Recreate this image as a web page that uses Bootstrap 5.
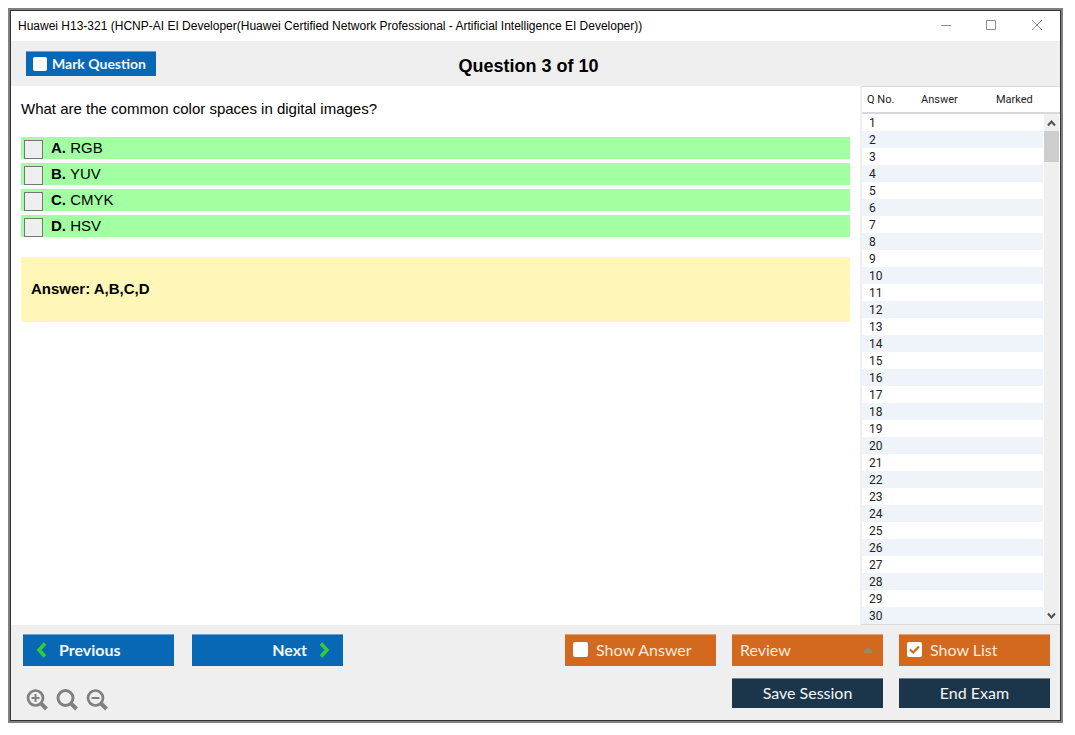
<!DOCTYPE html>
<html lang="en">
<head>
<meta charset="utf-8">
<meta name="viewport" content="width=device-width, initial-scale=1">
<title>Huawei H13-321 Exam</title>
<link href="https://cdn.jsdelivr.net/npm/bootstrap@5.3.0/dist/css/bootstrap.min.css" rel="stylesheet">
<style>
body { font-family: "Liberation Sans", Arial, sans-serif; font-size: 15px; line-height: 22px; color: #000; background: #fff; padding: 8px 12px 12px 8px; }
.app-frame { border: 2px solid #808080; }
.app-window { border: 1px solid #333; background: #fff; }
.title-bar { height: 30px; font-size: 12px; padding-left: 7px; }
.win-btn { width: 46px; height: 30px; color: #8c8c8c; border: 0; background: none; padding: 0; }
.win-btn svg, .zoom-btn svg, .nav-btn svg { display: block; }
.question-bar { background: #efefef; height: 45px; padding: 0 29px 0 15px; }
.question-bar > * { flex: 1 1 0; }
.question-bar h1 { font-size: 18px; line-height: 22px; padding-top: 4px; }
.lato { font-family: Lato, Carlito, sans-serif; }
.flat { border: 0; border-top: 1px solid; border-radius: 0; height: 32px; width: 151px; font-size: 16px; line-height: 20px; color: #fff; padding: 0 8px 2px; display: flex; align-items: center; }
.blue { background: #0868b6; border-color: #69a3d1; font-weight: 700; color: #f2f7fc; }
.orange { background: #d2691e; border-color: #e0a276; color: #fbe9dd; }
.navy { background: #1b354a; border-color: #75838f; color: #f4f6f8; height: 30px; }
.mark-btn { width: 130px; height: 25px; font-size: 14px; padding: 0 7px; gap: 5px; }
.nav-btn { padding: 0 12px 1px; gap: 8px; }
.flat .form-check-input { width: 15px; height: 15px; margin: 0; border: 0; border-radius: 2px; background-color: #fff; flex: none; }
.mark-btn .form-check-input { width: 14px; height: 14px; }
.flat .form-check-input:checked { background-image: url("data:image/svg+xml,%3Csvg xmlns='http://www.w3.org/2000/svg' viewBox='0 0 15 15'%3E%3Cpath d='M3 7.5 6.2 10.5 12 4.5' fill='none' stroke='%23d2691e' stroke-width='2.2'/%3E%3C/svg%3E"); }
.question-pane { padding: 12px 10px; min-width: 0; }
.option-list { margin-top: 17px; gap: 4px; }
.option-row { background: #a2ffa2; height: 22px; padding-left: 3px; gap: 8px; }
.option-row input { appearance: none; width: 19px; height: 19px; margin: 3px 0 0; border: 1px solid #767676; background: #efefef; flex: none; }
.option-row input:checked { background: #767676; }
.answer-box { background: #fef7b8; margin-top: 20px; padding: 21px 10px 22px; }
.list-pane { width: 200px; flex: none; border-left: 2px solid #efefef; border-bottom: 1px solid #d9d9d9; font-family: Roboto, sans-serif; font-size: 11px; }
.q-table { width: 100%; table-layout: fixed; border-collapse: separate; border-spacing: 0; color: #222; }
.q-table th { font-weight: 400; height: 28px; line-height: 14px; padding: 0 0 0 5px; border-top: 1px solid #d9d9d9; border-bottom: 2px solid #d9d9d9; }
.q-table td { height: 17px; line-height: 15px; padding: 2px 0 0 7px; font-size: 12px; }
.q-table tbody tr:nth-child(even) { background: #eef4f9; }
.scroll-col { width: 17px; flex: none; border-top: 1px solid #d9d9d9; }
.scroll-cap { height: 27px; border-bottom: 2px solid #d9d9d9; }
.scroll-track { background: #efefef; border: solid #fff; border-width: 0 1px; flex: 1; }
.scroll-thumb { background: #cdcdcd; height: 31px; }
.footer-bar { background: #efefef; padding: 9px 10px 9px 12px; }
.footer-nav { gap: 18px; }
.footer-actions { gap: 12px 16px; display: grid; grid-template-columns: repeat(3, 151px); align-content: start; }
.zoom-group { padding: 23px 0 0 3px; gap: 8px; }
.zoom-btn { border: 0; background: none; padding: 0; color: #808080; }
</style>
</head>
<body class="min-vh-100 d-flex">
<div class="app-frame flex-grow-1 d-flex">
<div class="app-window flex-grow-1 d-flex flex-column">
  <header class="title-bar d-flex align-items-center justify-content-between">
    <span>Huawei H13-321 (HCNP-AI EI Developer(Huawei Certified Network Professional - Artificial Intelligence EI Developer))</span>
    <div class="d-flex">
      <button class="win-btn" type="button" aria-label="Minimize"><svg width="46" height="30" fill="none" stroke="currentColor"><path d="M19 14.500h10"/></svg></button>
      <button class="win-btn" type="button" aria-label="Maximize"><svg width="46" height="30" fill="none" stroke="currentColor"><path d="M18.500 9.500h9v9h-9z"/></svg></button>
      <button class="win-btn" type="button" aria-label="Close"><svg width="46" height="30" fill="none" stroke="currentColor"><path d="M18 9l10 10M28 9l-10 10"/></svg></button>
    </div>
  </header>

  <div class="question-bar d-flex align-items-center">
    <div><label class="flat blue mark-btn lato"><input class="form-check-input" type="checkbox">Mark Question</label></div>
    <h1 class="fw-bold text-center m-0">Question 3 of 10</h1>
    <div></div>
  </div>

  <main class="d-flex flex-grow-1">
    <section class="question-pane flex-grow-1">
      <p class="m-0">What are the common color spaces in digital images?</p>
      <div class="option-list d-flex flex-column">
        <label class="option-row d-flex"><input type="checkbox"><span><b>A.</b> RGB</span></label>
        <label class="option-row d-flex"><input type="checkbox"><span><b>B.</b> YUV</span></label>
        <label class="option-row d-flex"><input type="checkbox"><span><b>C.</b> CMYK</span></label>
        <label class="option-row d-flex"><input type="checkbox"><span><b>D.</b> HSV</span></label>
      </div>
      <div class="answer-box fw-bold">Answer: A,B,C,D</div>
    </section>

    <aside class="list-pane d-flex">
      <div class="flex-grow-1">
        <table class="q-table">
          <colgroup><col style="width:54px"><col style="width:75px"><col></colgroup>
          <thead><tr><th scope="col">Q No.</th><th scope="col">Answer</th><th scope="col">Marked</th></tr></thead>
          <tbody>
            <tr><td>1</td><td></td><td></td></tr><tr><td>2</td><td></td><td></td></tr><tr><td>3</td><td></td><td></td></tr>
            <tr><td>4</td><td></td><td></td></tr><tr><td>5</td><td></td><td></td></tr><tr><td>6</td><td></td><td></td></tr>
            <tr><td>7</td><td></td><td></td></tr><tr><td>8</td><td></td><td></td></tr><tr><td>9</td><td></td><td></td></tr>
            <tr><td>10</td><td></td><td></td></tr><tr><td>11</td><td></td><td></td></tr><tr><td>12</td><td></td><td></td></tr>
            <tr><td>13</td><td></td><td></td></tr><tr><td>14</td><td></td><td></td></tr><tr><td>15</td><td></td><td></td></tr>
            <tr><td>16</td><td></td><td></td></tr><tr><td>17</td><td></td><td></td></tr><tr><td>18</td><td></td><td></td></tr>
            <tr><td>19</td><td></td><td></td></tr><tr><td>20</td><td></td><td></td></tr><tr><td>21</td><td></td><td></td></tr>
            <tr><td>22</td><td></td><td></td></tr><tr><td>23</td><td></td><td></td></tr><tr><td>24</td><td></td><td></td></tr>
            <tr><td>25</td><td></td><td></td></tr><tr><td>26</td><td></td><td></td></tr><tr><td>27</td><td></td><td></td></tr>
            <tr><td>28</td><td></td><td></td></tr><tr><td>29</td><td></td><td></td></tr><tr><td>30</td><td></td><td></td></tr>
          </tbody>
        </table>
      </div>
      <div class="scroll-col d-flex flex-column" aria-hidden="true">
        <div class="scroll-cap"></div>
        <div class="scroll-track d-flex flex-column">
          <svg width="15" height="17" fill="none" stroke="#505050" stroke-width="2"><path d="M4 11.500l3.500-4 3.500 4"/></svg>
          <div class="scroll-thumb"></div>
          <svg class="mt-auto" width="15" height="17" fill="none" stroke="#505050" stroke-width="2"><path d="M4 6.500l3.500 4 3.500-4"/></svg>
        </div>
      </div>
    </aside>
  </main>

  <footer class="footer-bar d-flex justify-content-between lato">
    <div>
      <div class="footer-nav d-flex">
        <button class="flat blue nav-btn" type="button"><svg width="16" height="18" fill="none" stroke="#2fd02f" stroke-width="3.500"><path d="M10 2.500L4 9l6 6.500"/></svg>Previous</button>
        <button class="flat blue nav-btn justify-content-end" type="button">Next<svg width="16" height="18" fill="none" stroke="#2fd02f" stroke-width="3.500"><path d="M6 2.500L12 9l-6 6.500"/></svg></button>
      </div>
      <div class="zoom-group d-flex">
        <button class="zoom-btn" type="button" aria-label="Zoom in"><svg width="22" height="22" fill="none" stroke="currentColor" stroke-width="2.700"><circle cx="9.500" cy="9" r="7.500"/><path d="M15 14.500l5.500 5.500" stroke-width="4"/><path d="M5.500 9h8M9.500 5v8" stroke-width="2"/></svg></button>
        <button class="zoom-btn" type="button" aria-label="Reset zoom"><svg width="22" height="22" fill="none" stroke="currentColor" stroke-width="3"><circle cx="9.500" cy="9" r="7.500"/><path d="M15 14.500l5.500 5.500" stroke-width="4"/></svg></button>
        <button class="zoom-btn" type="button" aria-label="Zoom out"><svg width="22" height="22" fill="none" stroke="currentColor" stroke-width="2.700"><circle cx="9.500" cy="9" r="7.500"/><path d="M15 14.500l5.500 5.500" stroke-width="4"/><path d="M5.500 9h8" stroke-width="2"/></svg></button>
      </div>
    </div>
    <div class="footer-actions">
      <label class="flat orange gap-2"><input class="form-check-input" type="checkbox">Show Answer</label>
      <button class="flat orange justify-content-between" type="button">Review<svg width="14" height="6" fill="#9a8672"><path d="M2 6l5-6 5 6z"/></svg></button>
      <label class="flat orange gap-2"><input class="form-check-input" type="checkbox" checked>Show List</label>
      <span></span>
      <button class="flat navy justify-content-center" type="button">Save Session</button>
      <button class="flat navy justify-content-center" type="button">End Exam</button>
    </div>
  </footer>
</div>
</div>
<script src="https://cdn.jsdelivr.net/npm/bootstrap@5.3.0/dist/js/bootstrap.bundle.min.js"></script>
</body>
</html>
